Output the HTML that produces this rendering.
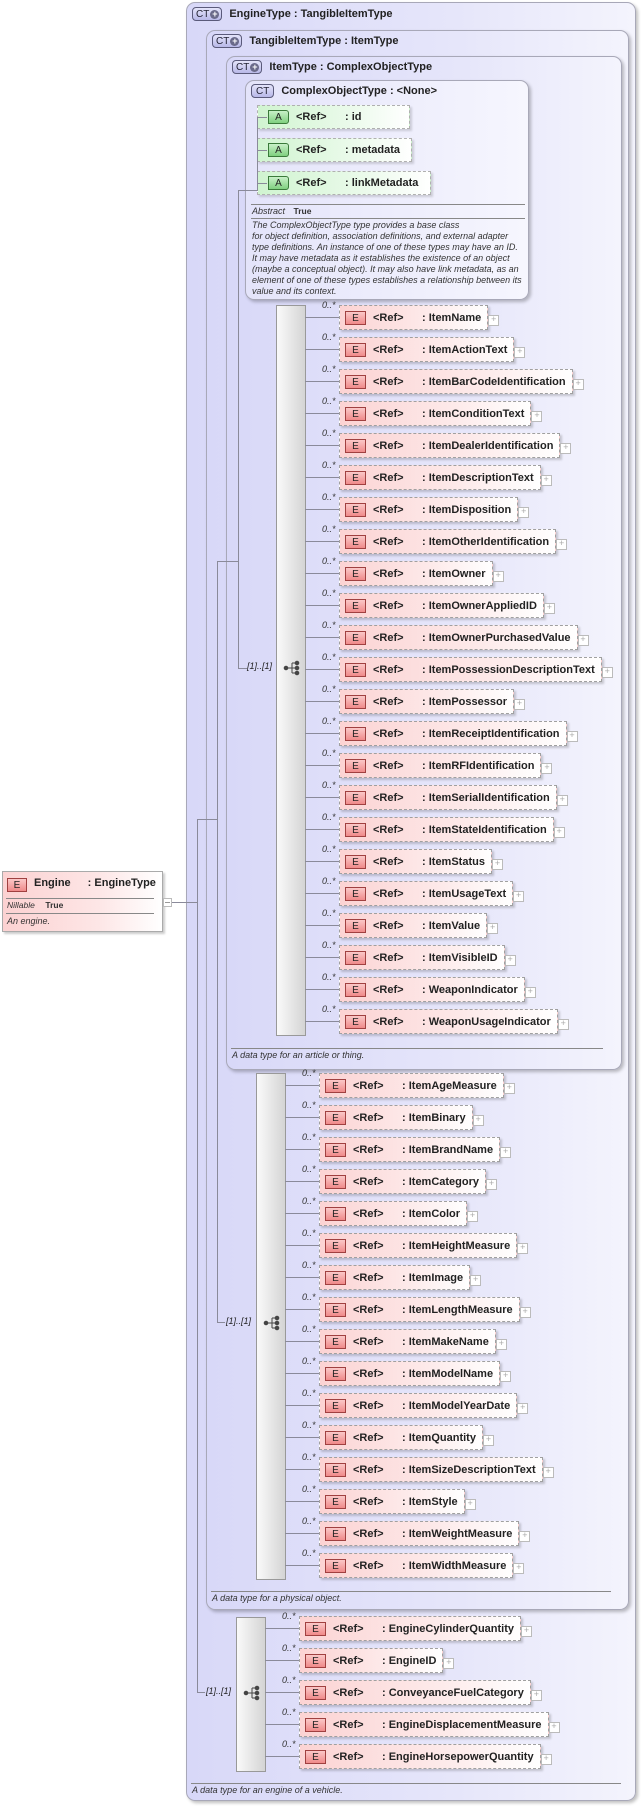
<!DOCTYPE html>
<html><head><meta charset="utf-8"><style>
*{box-sizing:border-box;margin:0;padding:0}
body{width:641px;height:1806px;background:#fff;position:relative;overflow:hidden;font-family:"Liberation Sans",Arial,sans-serif;color:#222}
.ab{position:absolute}
.box{position:absolute;border:1px solid #a8a8b8;border-radius:9px;background:linear-gradient(to right,#d8d8f8,#e6e6fa 60%,#f4f4fd);box-shadow:2px 2px 3px rgba(0,0,0,.25)}
.hd{position:absolute;left:6px;top:5px;font:bold 11px "Liberation Sans",sans-serif;white-space:nowrap;display:flex;align-items:center}
.ct{display:inline-flex;align-items:center;height:14px;border:1px solid #5a5a7a;border-radius:4px;background:linear-gradient(#e4e4fa,#b8b8e8);font:10px "Liberation Sans",sans-serif;padding:0 2px 0 3px;margin-right:7px;color:#223}
.ct s{text-decoration:none;display:inline-block;width:9px;height:9px;border-radius:50%;background:#6a6a8a;color:#fff;font-size:9px;line-height:9px;text-align:center;margin-left:1px;font-weight:bold}
.desc{position:absolute;font:italic 9px "Liberation Sans",sans-serif;color:#333;white-space:nowrap}
.sep{position:absolute;height:1px;background:#888}
.bar{position:absolute;border:1px solid #999;background:linear-gradient(to right,#fafafa,#d4d4d4)}
.h{position:absolute;height:1px;background:#8a8a9a}
.v{position:absolute;width:1px;background:#8a8a9a}
.seq{position:absolute}
.r{position:absolute;left:0;height:25px}
.r:before{content:"";position:absolute;left:0;top:12px;width:34px;height:1px;background:#8a8a9a}
.m{position:absolute;left:17px;top:-5px;font:italic 9px "Liberation Sans",sans-serif;color:#333}
.e{position:absolute;left:34px;top:0;height:25px;border:1px dashed #a0a0a0;background:linear-gradient(to right,#fcd3d3,#fdeaea 60%,#fff);box-shadow:2px 2px 2px rgba(0,0,0,.18);font:bold 11px "Liberation Sans",sans-serif;display:flex;align-items:center;padding-right:6px;white-space:nowrap}
.e i{font-style:normal;font-weight:normal;width:21px;height:14px;border:1px solid #a04040;background:linear-gradient(#fbc8c8,#f08a8a);margin:0 7px 0 5px;text-align:center;line-height:13px;font-size:10px;color:#222;flex:none}
.e b{width:49px;flex:none}
.e:after{content:"+";position:absolute;right:-12px;top:9px;width:9px;height:9px;border:1px solid #bbb;font:9px/7px "Liberation Sans",sans-serif;text-align:center;color:#aaa;background:#fff}
.a{position:absolute;left:257px;height:24px;border:1px dashed #b0b0b0;background:linear-gradient(to right,#d0f4d0,#eafaea 60%,#fff);box-shadow:2px 2px 2px rgba(0,0,0,.15);font:bold 11px "Liberation Sans",sans-serif;display:flex;align-items:center;padding-right:6px;white-space:nowrap}
.a i{font-style:normal;font-weight:normal;width:21px;height:14px;border:1px solid #3a7a3a;border-radius:0 3px 3px 0;background:linear-gradient(#c8f0c8,#80d080);margin:0 7px 0 10px;text-align:center;line-height:13px;font-size:10px;flex:none}
.a b{width:49px;flex:none}
.lab{position:absolute;font:italic 9px "Liberation Sans",sans-serif;color:#222}
.icn{position:absolute;width:18px;height:18px}
</style></head><body>

<div class="box" style="left:186px;top:2px;width:450px;height:1799px"></div>
<div class="hd" style="left:192px;top:7px"><span class="ct">CT<s>+</s></span>EngineType : TangibleItemType</div>

<div class="box" style="left:206px;top:30px;width:423px;height:1580px"></div>
<div class="hd" style="left:212px;top:34px"><span class="ct">CT<s>+</s></span>TangibleItemType : ItemType</div>

<div class="box" style="left:226px;top:56px;width:396px;height:1014px"></div>
<div class="hd" style="left:232px;top:60px"><span class="ct">CT<s>+</s></span>ItemType : ComplexObjectType</div>

<div class="box" style="left:245px;top:80px;width:284px;height:220px;background:linear-gradient(to right,#e4e4fa,#f6f6fe)"></div>
<div class="hd" style="left:251px;top:84px"><span class="ct" style="padding:0 4px">CT</span>ComplexObjectType : &lt;None&gt;</div>

<div class="a" style="top:105px;width:153px"><i>A</i><b>&lt;Ref&gt;</b>: id</div>
<div class="a" style="top:138px;width:155px"><i>A</i><b>&lt;Ref&gt;</b>: metadata</div>
<div class="a" style="top:171px;width:174px"><i>A</i><b>&lt;Ref&gt;</b>: linkMetadata</div>
<div class="v" style="left:257px;top:117px;height:66px"></div>
<div class="h" style="left:257px;top:117px;width:10px"></div>
<div class="h" style="left:257px;top:150px;width:10px"></div>
<div class="h" style="left:257px;top:183px;width:10px"></div>
<div class="h" style="left:238px;top:190px;width:19px"></div>
<div class="v" style="left:257px;top:183px;height:8px"></div>

<div class="sep" style="left:251px;top:204px;width:274px"></div>
<div class="desc" style="left:252px;top:206px"><span>Abstract</span> <b style="font-style:normal;font-size:8.5px;margin-left:6px">True</b></div>
<div class="sep" style="left:251px;top:218px;width:274px"></div>
<div class="desc" style="left:252px;top:220px;line-height:11px">The ComplexObjectType type provides a base class<br>for object definition, association definitions, and external adapter<br>type definitions. An instance of one of these types may have an ID.<br>It may have metadata as it establishes the existence of an object<br>(maybe a conceptual object). It may also have link metadata, as an<br>element of one of these types establishes a relationship between its<br>value and its context.</div>

<div class="v" style="left:238px;top:190px;height:478px"></div>
<div class="h" style="left:217px;top:561px;width:21px"></div>
<div class="h" style="left:238px;top:668px;width:9px"></div>
<div class="v" style="left:217px;top:561px;height:762px"></div>
<div class="h" style="left:197px;top:819px;width:20px"></div>
<div class="h" style="left:217px;top:1322px;width:8px"></div>
<div class="v" style="left:197px;top:819px;height:874px"></div>
<div class="h" style="left:197px;top:1692px;width:8px"></div>
<div class="h" style="left:171px;top:902px;width:26px"></div>

<div class="ab" style="left:2px;top:871px;width:161px;height:61px;border:1px solid #aaa;background:linear-gradient(to right,#fcd2d2,#fde6e6 60%,#fff);box-shadow:2px 2px 2px rgba(0,0,0,.2)"></div>
<div class="ab" style="left:7px;top:878px;width:20px;height:14px;border:1px solid #a04040;background:linear-gradient(#fbc8c8,#f08a8a);font:10px/13px 'Liberation Sans',sans-serif;text-align:center">E</div>
<div class="ab" style="left:34px;top:877px;font:bold 11px 'Liberation Sans',sans-serif;white-space:nowrap">Engine<span style="margin-left:17px">: EngineType</span></div>
<div class="sep" style="left:6px;top:898px;width:148px"></div>
<div class="desc" style="left:7px;top:900px"><span style="font-size:8.5px">Nillable</span> <b style="font-style:normal;font-size:8.5px;margin-left:8px">True</b></div>
<div class="sep" style="left:6px;top:913px;width:148px"></div>
<div class="desc" style="left:7px;top:916px">An engine.</div>
<div class="ab" style="left:163px;top:898px;width:9px;height:9px;border:1px solid #bbb;background:#fff"><div style="position:absolute;left:1px;top:3px;width:5px;height:1px;background:#999"></div></div>

<div class="bar" style="left:276px;top:305px;width:30px;height:731px"></div>
<div class="lab" style="left:247px;top:661px">[1]..[1]</div>
<svg class="icn" style="left:283px;top:659px" viewBox="0 0 18 18"><g fill="#444" stroke="#444"><circle cx="3" cy="9" r="1.8"/><line x1="3" y1="9" x2="9" y2="9"/><line x1="9" y1="4" x2="9" y2="14"/><line x1="9" y1="4" x2="14" y2="4"/><line x1="9" y1="9" x2="14" y2="9"/><line x1="9" y1="14" x2="14" y2="14"/><circle cx="14" cy="4" r="1.8"/><circle cx="14" cy="9" r="1.8"/><circle cx="14" cy="14" r="1.8"/></g></svg>
<div class="seq" style="left:305px;top:0">
<div class="r" style="top:305px"><span class="m">0..*</span><div class="e"><i>E</i><b>&lt;Ref&gt;</b>: ItemName</div></div>
<div class="r" style="top:337px"><span class="m">0..*</span><div class="e"><i>E</i><b>&lt;Ref&gt;</b>: ItemActionText</div></div>
<div class="r" style="top:369px"><span class="m">0..*</span><div class="e"><i>E</i><b>&lt;Ref&gt;</b>: ItemBarCodeIdentification</div></div>
<div class="r" style="top:401px"><span class="m">0..*</span><div class="e"><i>E</i><b>&lt;Ref&gt;</b>: ItemConditionText</div></div>
<div class="r" style="top:433px"><span class="m">0..*</span><div class="e"><i>E</i><b>&lt;Ref&gt;</b>: ItemDealerIdentification</div></div>
<div class="r" style="top:465px"><span class="m">0..*</span><div class="e"><i>E</i><b>&lt;Ref&gt;</b>: ItemDescriptionText</div></div>
<div class="r" style="top:497px"><span class="m">0..*</span><div class="e"><i>E</i><b>&lt;Ref&gt;</b>: ItemDisposition</div></div>
<div class="r" style="top:529px"><span class="m">0..*</span><div class="e"><i>E</i><b>&lt;Ref&gt;</b>: ItemOtherIdentification</div></div>
<div class="r" style="top:561px"><span class="m">0..*</span><div class="e"><i>E</i><b>&lt;Ref&gt;</b>: ItemOwner</div></div>
<div class="r" style="top:593px"><span class="m">0..*</span><div class="e"><i>E</i><b>&lt;Ref&gt;</b>: ItemOwnerAppliedID</div></div>
<div class="r" style="top:625px"><span class="m">0..*</span><div class="e"><i>E</i><b>&lt;Ref&gt;</b>: ItemOwnerPurchasedValue</div></div>
<div class="r" style="top:657px"><span class="m">0..*</span><div class="e"><i>E</i><b>&lt;Ref&gt;</b>: ItemPossessionDescriptionText</div></div>
<div class="r" style="top:689px"><span class="m">0..*</span><div class="e"><i>E</i><b>&lt;Ref&gt;</b>: ItemPossessor</div></div>
<div class="r" style="top:721px"><span class="m">0..*</span><div class="e"><i>E</i><b>&lt;Ref&gt;</b>: ItemReceiptIdentification</div></div>
<div class="r" style="top:753px"><span class="m">0..*</span><div class="e"><i>E</i><b>&lt;Ref&gt;</b>: ItemRFIdentification</div></div>
<div class="r" style="top:785px"><span class="m">0..*</span><div class="e"><i>E</i><b>&lt;Ref&gt;</b>: ItemSerialIdentification</div></div>
<div class="r" style="top:817px"><span class="m">0..*</span><div class="e"><i>E</i><b>&lt;Ref&gt;</b>: ItemStateIdentification</div></div>
<div class="r" style="top:849px"><span class="m">0..*</span><div class="e"><i>E</i><b>&lt;Ref&gt;</b>: ItemStatus</div></div>
<div class="r" style="top:881px"><span class="m">0..*</span><div class="e"><i>E</i><b>&lt;Ref&gt;</b>: ItemUsageText</div></div>
<div class="r" style="top:913px"><span class="m">0..*</span><div class="e"><i>E</i><b>&lt;Ref&gt;</b>: ItemValue</div></div>
<div class="r" style="top:945px"><span class="m">0..*</span><div class="e"><i>E</i><b>&lt;Ref&gt;</b>: ItemVisibleID</div></div>
<div class="r" style="top:977px"><span class="m">0..*</span><div class="e"><i>E</i><b>&lt;Ref&gt;</b>: WeaponIndicator</div></div>
<div class="r" style="top:1009px"><span class="m">0..*</span><div class="e"><i>E</i><b>&lt;Ref&gt;</b>: WeaponUsageIndicator</div></div>
</div>
<div class="sep" style="left:231px;top:1048px;width:372px"></div>
<div class="desc" style="left:232px;top:1050px">A data type for an article or thing.</div>

<div class="bar" style="left:256px;top:1073px;width:30px;height:507px"></div>
<div class="lab" style="left:226px;top:1316px">[1]..[1]</div>
<svg class="icn" style="left:263px;top:1314px" viewBox="0 0 18 18"><g fill="#444" stroke="#444"><circle cx="3" cy="9" r="1.8"/><line x1="3" y1="9" x2="9" y2="9"/><line x1="9" y1="4" x2="9" y2="14"/><line x1="9" y1="4" x2="14" y2="4"/><line x1="9" y1="9" x2="14" y2="9"/><line x1="9" y1="14" x2="14" y2="14"/><circle cx="14" cy="4" r="1.8"/><circle cx="14" cy="9" r="1.8"/><circle cx="14" cy="14" r="1.8"/></g></svg>
<div class="seq" style="left:285px;top:0">
<div class="r" style="top:1073px"><span class="m">0..*</span><div class="e"><i>E</i><b>&lt;Ref&gt;</b>: ItemAgeMeasure</div></div>
<div class="r" style="top:1105px"><span class="m">0..*</span><div class="e"><i>E</i><b>&lt;Ref&gt;</b>: ItemBinary</div></div>
<div class="r" style="top:1137px"><span class="m">0..*</span><div class="e"><i>E</i><b>&lt;Ref&gt;</b>: ItemBrandName</div></div>
<div class="r" style="top:1169px"><span class="m">0..*</span><div class="e"><i>E</i><b>&lt;Ref&gt;</b>: ItemCategory</div></div>
<div class="r" style="top:1201px"><span class="m">0..*</span><div class="e"><i>E</i><b>&lt;Ref&gt;</b>: ItemColor</div></div>
<div class="r" style="top:1233px"><span class="m">0..*</span><div class="e"><i>E</i><b>&lt;Ref&gt;</b>: ItemHeightMeasure</div></div>
<div class="r" style="top:1265px"><span class="m">0..*</span><div class="e"><i>E</i><b>&lt;Ref&gt;</b>: ItemImage</div></div>
<div class="r" style="top:1297px"><span class="m">0..*</span><div class="e"><i>E</i><b>&lt;Ref&gt;</b>: ItemLengthMeasure</div></div>
<div class="r" style="top:1329px"><span class="m">0..*</span><div class="e"><i>E</i><b>&lt;Ref&gt;</b>: ItemMakeName</div></div>
<div class="r" style="top:1361px"><span class="m">0..*</span><div class="e"><i>E</i><b>&lt;Ref&gt;</b>: ItemModelName</div></div>
<div class="r" style="top:1393px"><span class="m">0..*</span><div class="e"><i>E</i><b>&lt;Ref&gt;</b>: ItemModelYearDate</div></div>
<div class="r" style="top:1425px"><span class="m">0..*</span><div class="e"><i>E</i><b>&lt;Ref&gt;</b>: ItemQuantity</div></div>
<div class="r" style="top:1457px"><span class="m">0..*</span><div class="e"><i>E</i><b>&lt;Ref&gt;</b>: ItemSizeDescriptionText</div></div>
<div class="r" style="top:1489px"><span class="m">0..*</span><div class="e"><i>E</i><b>&lt;Ref&gt;</b>: ItemStyle</div></div>
<div class="r" style="top:1521px"><span class="m">0..*</span><div class="e"><i>E</i><b>&lt;Ref&gt;</b>: ItemWeightMeasure</div></div>
<div class="r" style="top:1553px"><span class="m">0..*</span><div class="e"><i>E</i><b>&lt;Ref&gt;</b>: ItemWidthMeasure</div></div>
</div>
<div class="sep" style="left:211px;top:1591px;width:400px"></div>
<div class="desc" style="left:212px;top:1593px">A data type for a physical object.</div>

<div class="bar" style="left:236px;top:1617px;width:30px;height:155px"></div>
<div class="lab" style="left:206px;top:1686px">[1]..[1]</div>
<svg class="icn" style="left:243px;top:1684px" viewBox="0 0 18 18"><g fill="#444" stroke="#444"><circle cx="3" cy="9" r="1.8"/><line x1="3" y1="9" x2="9" y2="9"/><line x1="9" y1="4" x2="9" y2="14"/><line x1="9" y1="4" x2="14" y2="4"/><line x1="9" y1="9" x2="14" y2="9"/><line x1="9" y1="14" x2="14" y2="14"/><circle cx="14" cy="4" r="1.8"/><circle cx="14" cy="9" r="1.8"/><circle cx="14" cy="14" r="1.8"/></g></svg>
<div class="seq" style="left:265px;top:0">
<div class="r" style="top:1616px"><span class="m">0..*</span><div class="e"><i>E</i><b>&lt;Ref&gt;</b>: EngineCylinderQuantity</div></div>
<div class="r" style="top:1648px"><span class="m">0..*</span><div class="e"><i>E</i><b>&lt;Ref&gt;</b>: EngineID</div></div>
<div class="r" style="top:1680px"><span class="m">0..*</span><div class="e"><i>E</i><b>&lt;Ref&gt;</b>: ConveyanceFuelCategory</div></div>
<div class="r" style="top:1712px"><span class="m">0..*</span><div class="e"><i>E</i><b>&lt;Ref&gt;</b>: EngineDisplacementMeasure</div></div>
<div class="r" style="top:1744px"><span class="m">0..*</span><div class="e"><i>E</i><b>&lt;Ref&gt;</b>: EngineHorsepowerQuantity</div></div>
</div>
<div class="sep" style="left:191px;top:1783px;width:430px"></div>
<div class="desc" style="left:192px;top:1785px">A data type for an engine of a vehicle.</div>
</body></html>
